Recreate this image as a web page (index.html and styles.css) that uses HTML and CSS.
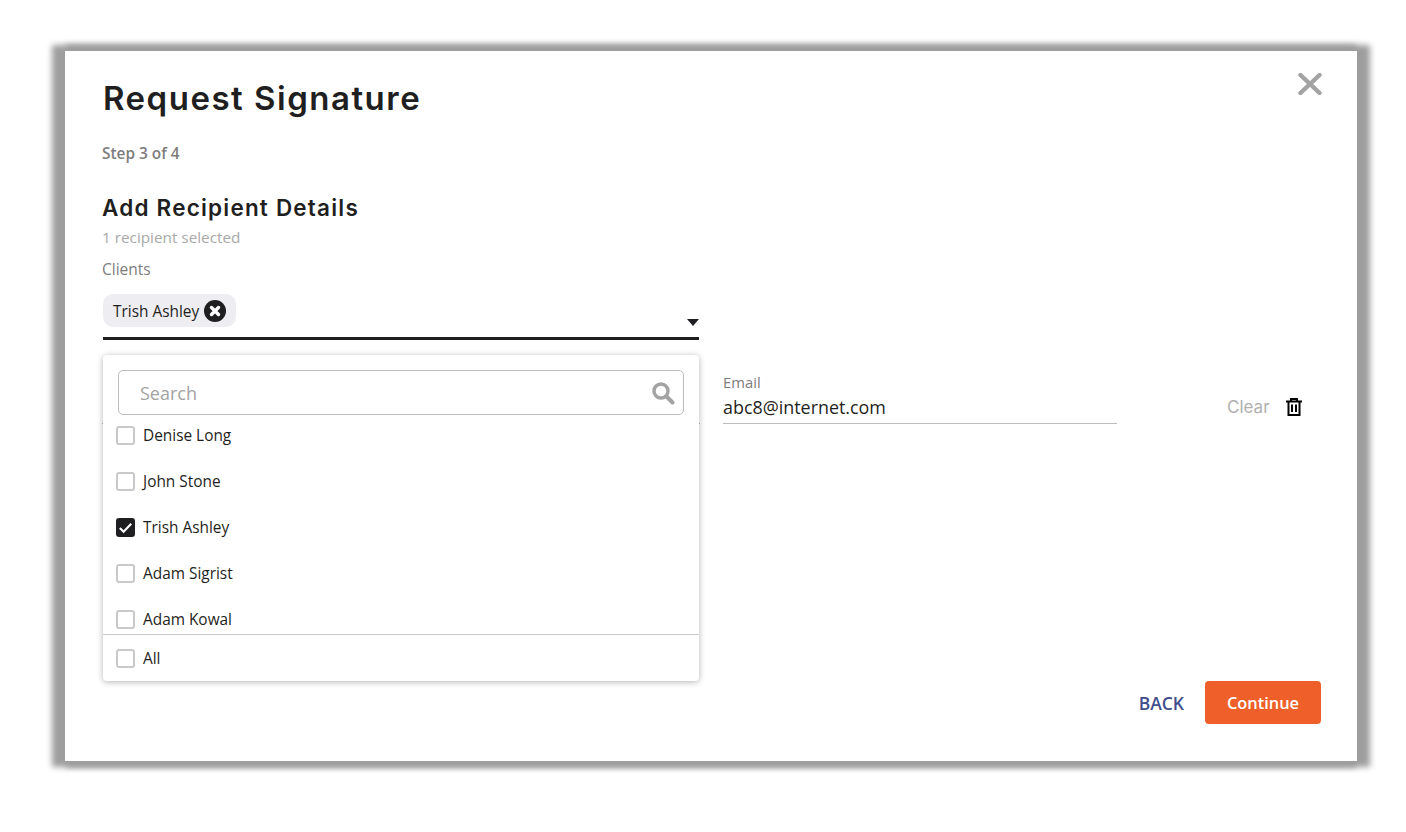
FILE: index.html
```html
<!DOCTYPE html>
<html>
  <head>
    <title>Request Signature</title>
    <link rel="stylesheet" href="styles.css">
  </head>
  <body>
    <div class="modal">
      <svg class="closeIcon" width="26" height="22" viewBox="0 0 26 22">
        <path d="M3.500 2 L22.500 20 M22.500 2 L3.500 20" stroke="#a3a3a3" stroke-width="4.400" stroke-linecap="round" fill="none"/>
      </svg>
      <h1 class="title">Request Signature</h1>
      <div class="step">Step 3 of 4</div>
      <h2 class="subtitle">Add Recipient Details</h2>
      <div class="selected">1 recipient selected</div>
      <div class="clientsLabel">Clients</div>

      <div class="clientsField">
        <div class="chip">
          <span class="chipName">Trish Ashley</span>
          <svg width="22" height="22" viewBox="0 0 22 22">
            <circle cx="11" cy="11" r="11" fill="#1f1f21"/>
            <path d="M7.500 7.500 L14.500 14.500 M14.500 7.500 L7.500 14.500" stroke="#fff" stroke-width="3.400" stroke-linecap="round"/>
          </svg>
        </div>
        <div class="caret"></div>
      </div>

      <div class="recipientRow">
        <div class="nameField"></div>
        <div class="emailField">
          <label>Email</label>
          <div class="emailValue">abc8@internet.com</div>
        </div>
        <div class="clearBox">
          <span>Clear</span>
          <svg width="16" height="18" viewBox="0 0 16 18">
            <path d="M0 3.500 H16 M5 3.500 V1 H11 V3.500 M2.500 3.500 V17 H13.500 V3.500 M6 6.500 V14 M10 6.500 V14" stroke="#000" stroke-width="2" fill="none"/>
          </svg>
        </div>
      </div>

      <div class="dropdown">
        <div class="searchBox">
          <span>Search</span>
          <svg width="24" height="24" viewBox="0 0 24 24">
            <circle cx="10" cy="10" r="7" stroke="#a3a3a3" stroke-width="3.400" fill="none"/>
            <path d="M15.500 15.500 L21.500 21.500" stroke="#a3a3a3" stroke-width="4" stroke-linecap="round"/>
          </svg>
        </div>
        <div class="optionList">
          <div class="option"><span class="check"></span>Denise Long</div>
          <div class="option"><span class="check"></span>John Stone</div>
          <div class="option">
            <span class="check checked">
              <svg width="19" height="19" viewBox="0 0 20 20">
                <path d="M4 10.500 L8 14.500 L16 6" stroke="#fff" stroke-width="2.200" fill="none"/>
              </svg>
            </span>Trish Ashley
          </div>
          <div class="option"><span class="check"></span>Adam Sigrist</div>
          <div class="option"><span class="check"></span>Adam Kowal</div>
        </div>
        <div class="option"><span class="check"></span>All</div>
      </div>

      <div class="buttons">
        <a class="backBtn">BACK</a>
        <a class="continueBtn">Continue</a>
      </div>
    </div>
  </body>
</html>
```

FILE: styles.css
```css
body {
  margin: 0;
  padding-bottom: 60px;
  background-color: #fff;
  font-family: "Open Sans", "Noto Sans", sans-serif;
  color: #1f1f21;
}

.modal {
  position: relative;
  box-sizing: border-box;
  width: 1292px;
  height: 710px;
  margin: 51px 0 0 65px;
  padding: 24px 36px 0 37px;
  background-color: #fff;
  box-shadow: -7px 0 6px 6px #9e9e9e, 7px 0 6px 6px #9e9e9e;
}

.closeIcon {
  position: absolute;
  top: 22px;
  right: 34px;
}

.title {
  margin: 0 0 0 1px;
  font-family: Inter, sans-serif;
  font-size: 33px;
  line-height: 46px;
  font-weight: 600;
  letter-spacing: 1.5px;
}

.step {
  margin-top: 23px;
  font-size: 15.400px;
  line-height: 20px;
  font-weight: 600;
  color: #7d7d7d;
}

.subtitle {
  margin: 29px 0 0;
  font-family: Inter, sans-serif;
  font-size: 22.500px;
  line-height: 30px;
  font-weight: 600;
  letter-spacing: 1.200px;
}

.selected {
  margin-top: 4px;
  font-size: 15.300px;
  line-height: 20px;
  color: #a9a9a9;
}

.clientsLabel {
  margin-top: 12px;
  font-size: 15.500px;
  line-height: 20px;
  color: #7d7d7d;
}

.clientsField {
  position: relative;
  width: 596px;
  height: 43px;
  margin: 15px 0 0 1px;
  border-bottom: 3px solid #1f1f21;
}

.chip {
  display: inline-flex;
  align-items: center;
  gap: 5px;
  height: 33px;
  padding: 0 10px;
  background-color: #eeeef2;
  border-radius: 10px;
  font-size: 15.400px;
}

.chipName {
  padding-top: 2px;
}

.caret {
  position: absolute;
  right: 0;
  bottom: 11px;
  border-left: 6px solid transparent;
  border-right: 6px solid transparent;
  border-top: 7px solid #1f1f21;
}

.recipientRow {
  display: flex;
  align-items: flex-end;
  height: 84px;
}

.nameField {
  box-sizing: border-box;
  flex-shrink: 0;
  width: 598px;
  height: 30px;
  margin-right: 23px;
  border-bottom: 1px solid #bdbdbd;
}

.dropdown {
  position: absolute;
  left: 38px;
  top: 304px;
  width: 596px;
  height: 326px;
  background-color: #fff;
  border-radius: 4px;
  box-shadow: 0 1px 6px rgba(0, 0, 0, 0.3);
}

.searchBox {
  display: flex;
  justify-content: space-between;
  align-items: center;
  box-sizing: border-box;
  width: 566px;
  height: 45px;
  margin: 15px 0 0 15px;
  padding: 0 8px 0 21px;
  border: 1px solid #bdbdbd;
  border-radius: 5px;
  font-size: 18px;
  color: #a3a3a3;
}

.optionList {
  height: 222px;
  margin-top: -3px;
  overflow: hidden;
  border-bottom: 1px solid #c9c9c9;
}

.option {
  display: flex;
  align-items: center;
  gap: 8px;
  height: 46px;
  padding-left: 13px;
  font-size: 15.400px;
}

.check {
  box-sizing: border-box;
  width: 19px;
  height: 19px;
  flex-shrink: 0;
  border: 2px solid #c9c9c9;
  border-radius: 3px;
}

.checked {
  border: 0;
  background-color: #1f1f21;
}

.emailField {
  flex-shrink: 0;
  width: 394px;
  border-bottom: 1px solid #bdbdbd;
}

.emailField label {
  display: block;
  margin-bottom: 4px;
  font-size: 14.800px;
  line-height: 18px;
  color: #7d7d7d;
}

.emailValue {
  font-size: 17.900px;
  line-height: 24px;
  padding-bottom: 4px;
}

.clearBox {
  display: flex;
  align-items: center;
  gap: 16px;
  margin-left: 110px;
  height: 32px;
  margin-bottom: 1px;
  font-family: Inter, sans-serif;
  font-size: 17px;
  color: #b0b0b0;
}

.buttons {
  position: absolute;
  right: 36px;
  bottom: 37px;
  display: flex;
  align-items: center;
  gap: 21px;
}

.backBtn {
  font-size: 17.500px;
  font-weight: 600;
  color: #3f4d8c;
}

.continueBtn {
  width: 116px;
  height: 43px;
  line-height: 43px;
  text-align: center;
  background-color: #ef5f2a;
  border-radius: 4px;
  font-size: 16.400px;
  font-weight: 600;
  color: #fff;
}
```
